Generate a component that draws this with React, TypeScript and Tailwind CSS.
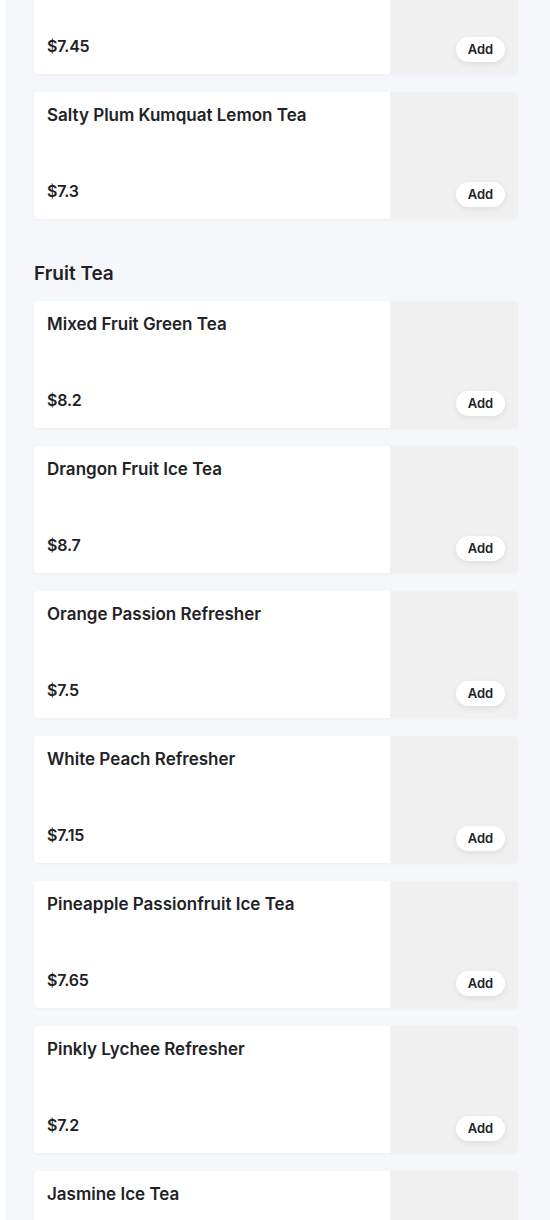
import React from 'react';

// Menu list: sections of drinks, each card with name, price and an image slot
interface Item {
  name: string;
  price: string;
}

interface Section {
  title?: string;
  items: Item[];
}

const sections: Section[] = [
  {
    items: [
      { name: 'Lemon Green Tea', price: '$7.45' },
      { name: 'Salty Plum Kumquat Lemon Tea', price: '$7.3' },
    ],
  },
  {
    title: 'Fruit Tea',
    items: [
      { name: 'Mixed Fruit Green Tea', price: '$8.2' },
      { name: 'Drangon Fruit Ice Tea', price: '$8.7' },
      { name: 'Orange Passion Refresher', price: '$7.5' },
      { name: 'White Peach Refresher', price: '$7.15' },
      { name: 'Pineapple Passionfruit Ice Tea', price: '$7.65' },
      { name: 'Pinkly Lychee Refresher', price: '$7.2' },
      { name: 'Jasmine Ice Tea', price: '$7.2' },
    ],
  },
];

const MenuCard: React.FC<{ item: Item }> = ({ item }) => (
  <div className="flex h-[127px] overflow-hidden rounded-[4px] bg-white shadow-[0_1px_3px_rgba(0,0,0,0.04)]">
    <div className="flex flex-1 flex-col justify-between pl-[13px] pr-3 pt-[11px] pb-[17px]">
      <div className="text-[17px] leading-6 font-semibold text-[#222226]">{item.name}</div>
      <div className="text-[16px] leading-[22px] font-semibold tracking-[-0.2px] text-[#222226]">{item.price}</div>
    </div>
    <div className="relative w-[128px] bg-[#f0f0f0]">
      <button className="absolute right-[13px] bottom-[12px] h-[25px] w-[49px] rounded-full bg-white text-[13px] font-semibold text-[#222226] shadow-[0_2px_6px_rgba(0,0,0,0.08)]">
        Add
      </button>
    </div>
  </div>
);

export default function App() {
  return (
    <div
      className="h-[1220px] overflow-hidden border-l-[5px] border-white bg-[#f6f7fb] pl-[29px] pr-[32px]"
      style={{ fontFamily: 'Inter, "Noto Sans", sans-serif' }}
    >
      <div className="-mt-[53px] flex flex-col">
        {sections.map((s, i) => (
          <section key={i} className={i > 0 ? 'mt-[38px]' : ''}>
            {s.title && (
              <h2 className="mb-[11px] text-[19px] leading-[33px] font-semibold text-[#222226]">
                {s.title}
              </h2>
            )}
            <div className="flex flex-col gap-[18px]">
              {s.items.map(item => (
                <MenuCard key={item.name} item={item} />
              ))}
            </div>
          </section>
        ))}
      </div>
    </div>
  );
}
